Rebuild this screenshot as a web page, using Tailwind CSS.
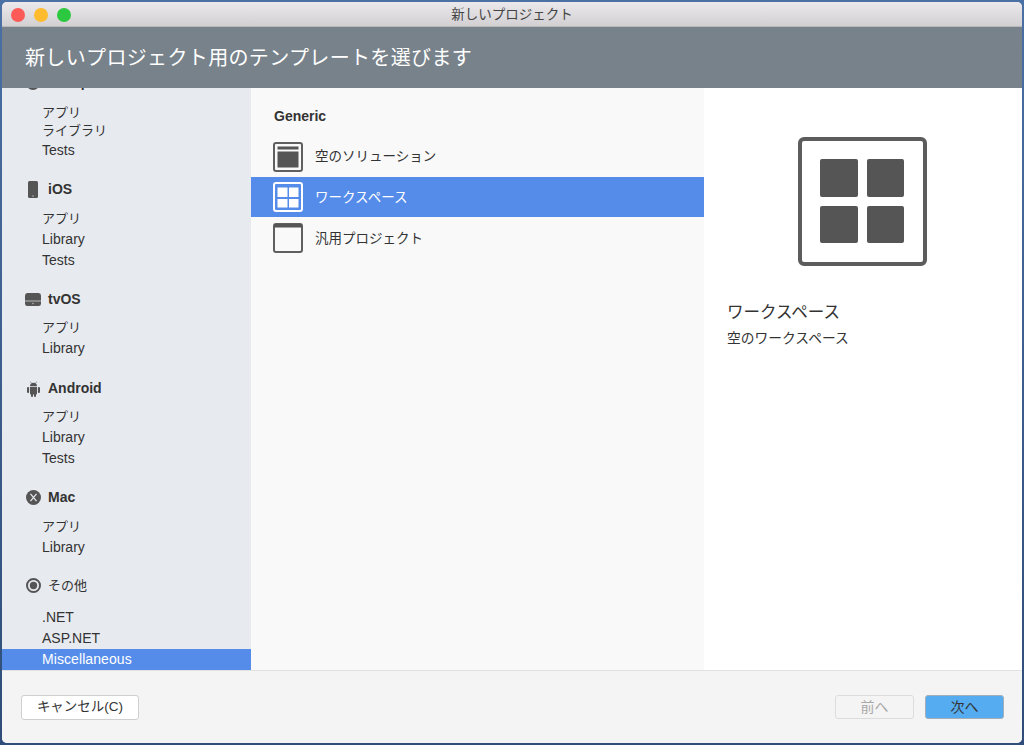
<!DOCTYPE html>
<html lang="ja">
<head>
<meta charset="UTF-8">
<title>新しいプロジェクト</title>
<script src="https://cdn.jsdelivr.net/npm/@tailwindcss/browser@4"></script>
</head>
<body class="w-[1024px] h-[745px] overflow-hidden bg-gradient-to-b from-[#4a70a4] to-[#2f4d78] p-[2px] font-['Liberation_Sans','Noto_Sans_CJK_JP',sans-serif] text-[#333]">
<div class="w-full h-full flex flex-col rounded-[5px] overflow-hidden bg-white">

  <!-- title bar -->
  <div class="h-[25px] shrink-0 flex items-center relative pt-[1px] bg-gradient-to-b from-[#ebe9eb] to-[#d2d0d2] border-b border-[#b9b9b9]">
    <div class="flex gap-[9px] pl-[9px]">
      <span class="w-[14px] h-[14px] rounded-full bg-[#fc5b57]"></span>
      <span class="w-[14px] h-[14px] rounded-full bg-[#febb2e]"></span>
      <span class="w-[14px] h-[14px] rounded-full bg-[#2cc83f]"></span>
    </div>
    <div class="absolute inset-0 pt-[3px] flex items-center justify-center text-[13.5px] text-[#444]">新しいプロジェクト</div>
  </div>

  <!-- header -->
  <div class="h-[61px] shrink-0 flex items-center pl-[23px] pt-[1px] bg-[#78828b] text-white text-[20px] tracking-[0.35px]">新しいプロジェクト用のテンプレートを選びます</div>

  <div class="flex-1 flex min-h-0">
    <!-- sidebar -->
    <div class="w-[249px] shrink-0 bg-[#e7eaef] flex flex-col justify-end overflow-hidden text-[14px] leading-[21px]">
      <div class="flex items-center h-[21px] pl-[22px] gap-[6px] font-bold">
        <span class="w-[18px] flex justify-center">
          <svg class="w-[14px] h-[14px]" viewBox="0 0 14 14"><circle cx="7" cy="7" r="7" fill="#555"/></svg>
        </span>
        <span>Multiplatform</span>
      </div>
      <div class="mt-[11px] pl-[40px] text-[13px]">
        <div class="h-[18px] leading-[18px]">アプリ</div>
        <div class="h-[18px] leading-[18px]">ライブラリ</div>
        <div class="h-[21px] text-[14px]">Tests</div>
      </div>

      <div class="mt-[18px] flex items-center h-[21px] pl-[22px] gap-[6px] font-bold">
        <span class="w-[18px] flex justify-center">
          <svg class="w-[10px] h-[17px]" viewBox="0 0 10 17"><rect width="10" height="17" rx="1.5" fill="#555"/><circle cx="5" cy="15" r="0.7" fill="#ccc"/></svg>
        </span>
        <span>iOS</span>
      </div>
      <div class="mt-[8px] pl-[40px]">
        <div class="h-[21px] text-[13px]">アプリ</div>
        <div class="h-[21px]">Library</div>
        <div class="h-[21px]">Tests</div>
      </div>

      <div class="mt-[18px] flex items-center h-[21px] pl-[22px] gap-[6px] font-bold">
        <span class="w-[18px] flex justify-center">
          <svg class="w-[16px] h-[13px]" viewBox="0 0 17 13" preserveAspectRatio="none"><rect width="17" height="13" rx="2.5" fill="#555"/><path d="M0 8h17" stroke="#e7eaef" stroke-width="0.7"/><circle cx="8.5" cy="10.5" r="0.7" fill="#ccc"/></svg>
        </span>
        <span>tvOS</span>
      </div>
      <div class="mt-[8px] pl-[40px]">
        <div class="h-[20px] leading-[20px] text-[13px]">アプリ</div>
        <div class="h-[21px]">Library</div>
      </div>

      <div class="mt-[19px] flex items-center h-[21px] pl-[22px] gap-[6px] font-bold">
        <span class="w-[18px] flex justify-center">
          <svg class="w-[13px] h-[16px]" viewBox="0 0 13 16" fill="#555"><path d="M3 5.2a3.5 3.5 0 0 1 7 0z"/><path d="M4.3 2.2 3.4.6M8.7 2.2 9.6.6" stroke="#555" stroke-width="0.6"/><path d="M3 6h7v6.5a1 1 0 0 1-1 1H4a1 1 0 0 1-1-1z"/><rect y="6" width="2.1" height="6" rx="1"/><rect x="10.9" y="6" width="2.1" height="6" rx="1"/><rect x="4" y="12" width="2" height="4" rx="1"/><rect x="7" y="12" width="2" height="4" rx="1"/></svg>
        </span>
        <span>Android</span>
      </div>
      <div class="mt-[7px] pl-[40px]">
        <div class="h-[21px] text-[13px]">アプリ</div>
        <div class="h-[21px]">Library</div>
        <div class="h-[21px]">Tests</div>
      </div>

      <div class="mt-[18px] flex items-center h-[21px] pl-[22px] gap-[6px] font-bold">
        <span class="w-[18px] flex justify-center">
          <svg class="w-[15px] h-[15px]" viewBox="0 0 15 15"><circle cx="7.5" cy="7.5" r="7.5" fill="#555"/><path d="M4.5 3.8 10.5 11.2M10.5 3.8 4.5 11.2" stroke="#e7eaef" stroke-width="1.2"/></svg>
        </span>
        <span>Mac</span>
      </div>
      <div class="mt-[8px] pl-[40px]">
        <div class="h-[21px] text-[13px]">アプリ</div>
        <div class="h-[21px]">Library</div>
      </div>

      <div class="mt-[17px] flex items-center h-[21px] pl-[22px] gap-[6px] text-[13px]">
        <span class="w-[18px] flex justify-center">
          <svg class="w-[15px] h-[15px]" viewBox="0 0 15 15"><circle cx="7.5" cy="7.5" r="6.5" fill="none" stroke="#555" stroke-width="2"/><circle cx="7.5" cy="7.5" r="3.7" fill="#555"/></svg>
        </span>
        <span>その他</span>
      </div>
      <div class="mt-[11px]">
        <div class="h-[21px] pl-[40px]">.NET</div>
        <div class="h-[21px] pl-[40px]">ASP.NET</div>
        <div class="h-[21px] pl-[40px] bg-[#558cea] text-white tracking-[0.08px]">Miscellaneous</div>
      </div>
    </div>

    <!-- template list -->
    <div class="w-[453px] shrink-0 bg-[#f9f9f9] pt-[18px] text-[13.5px]">
      <div class="h-[20px] leading-[20px] pl-[23px] font-bold text-[14px]">Generic</div>
      <div class="mt-[10px] h-[41px] flex items-center pl-[22px] gap-[12px]">
        <svg class="w-[30px] h-[30px]" viewBox="0 0 30 30"><rect x="1" y="1" width="28" height="28" rx="2" fill="none" stroke="#5f5f5f" stroke-width="2"/><rect x="4.5" y="4.5" width="21" height="3" fill="#555"/><rect x="4.5" y="9.5" width="21" height="16" fill="#555"/></svg>
        <span class="pt-[2px]">空のソリューション</span>
      </div>
      <div class="h-[40px] flex items-center pl-[22px] gap-[12px] bg-[#558cea] text-white">
        <svg class="w-[30px] h-[30px]" viewBox="0 0 30 30"><rect x="1" y="1" width="28" height="28" rx="2" fill="none" stroke="#fff" stroke-width="2"/><rect x="4.5" y="5.5" width="10" height="9.5" fill="#fff"/><rect x="16" y="5.5" width="9.5" height="9.5" fill="#fff"/><rect x="4.5" y="17" width="10" height="8.5" fill="#fff"/><rect x="16" y="17" width="9.5" height="8.5" fill="#fff"/></svg>
        <span class="pt-[2px]">ワークスペース</span>
      </div>
      <div class="h-[41px] flex items-center pl-[22px] gap-[12px]">
        <svg class="w-[30px] h-[30px]" viewBox="0 0 30 30"><rect x="1" y="1" width="28" height="28" rx="2" fill="none" stroke="#5f5f5f" stroke-width="2"/><rect x="1" y="1" width="28" height="3.5" fill="#555"/></svg>
        <span class="pt-[3px]">汎用プロジェクト</span>
      </div>
    </div>

    <!-- details -->
    <div class="flex-1 bg-white pl-[23px]">
      <svg class="mt-[49px] ml-[71px] w-[129px] h-[129px]" viewBox="0 0 129 129" fill="#555">
        <rect x="2" y="2" width="125" height="125" rx="4" fill="#fff" stroke="#5c5c5c" stroke-width="4"/>
        <rect x="22" y="22" width="38" height="38" rx="2"/>
        <rect x="69" y="22" width="37" height="38" rx="2"/>
        <rect x="22" y="69" width="38" height="37" rx="2"/>
        <rect x="69" y="69" width="37" height="37" rx="2"/>
      </svg>
      <div class="mt-[34px] text-[16.5px] leading-[24px]">ワークスペース</div>
      <div class="mt-[5px] text-[13.75px] leading-[20px]">空のワークスペース</div>
    </div>
  </div>

  <!-- footer -->
  <div class="h-[73px] shrink-0 flex items-start justify-between pt-[24px] pl-[19px] pr-[18px] bg-[#f4f4f4] border-t border-[#e2e2e2] text-[14px]">
    <button class="w-[118px] h-[25px] rounded-[3px] bg-white border border-[#cfcfcf] text-[#333] text-[13.5px]">キャンセル(C)</button>
    <div class="flex gap-[11px]">
      <button class="w-[79px] h-[24px] rounded-[3px] bg-[#f4f4f4] border border-[#dcdcdc] text-[#a8a8a8]">前へ</button>
      <button class="w-[79px] h-[24px] rounded-[3px] bg-[#55acf0] border border-[#a3aeb8] text-[#333]">次へ</button>
    </div>
  </div>
</div>
</body>
</html>
